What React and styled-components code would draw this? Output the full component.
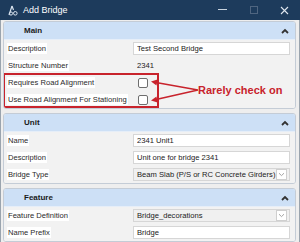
import React from "react";
import styled, { createGlobalStyle } from "styled-components";

const GlobalStyle = createGlobalStyle`
  html, body {
    margin: 0;
    padding: 0;
    background: #ececec;
    font-family: "Liberation Sans", Arial, sans-serif;
  }
`;

const Window = styled.div`
  width: 300px;
  height: 242px;
  display: flex;
  flex-direction: column;
  overflow: hidden;
  background: #eeeeee;
`;

const TitleBar = styled.div`
  height: 20px;
  flex: none;
  background: #1d3b5c;
  display: flex;
  align-items: center;
  padding-left: 7px;
  color: #ffffff;
  font-size: 9px;
`;

const TitleText = styled.span`
  margin-left: 5px;
  flex: 1;
`;

const WinButton = styled.div`
  width: 31px;
  height: 20px;
  display: flex;
  align-items: center;
  justify-content: center;
`;

const Body = styled.div`
  flex: 1;
  display: flex;
  flex-direction: column;
  gap: 4px;
  padding: 1px 3px 0 2px;
  border-left: 1px solid #9aa4ae;
  border-right: 1px solid #9aa4ae;
`;

const Section = styled.div`
  background: #f4f4f4;
  border: 1px solid #c4ccd6;
  border-radius: 3px;
  overflow: hidden;
`;

const SectionHeader = styled.div`
  height: 17px;
  background: #cde0f6;
  display: flex;
  align-items: center;
  padding: 0 6px 0 20px;
  font-size: 8px;
  font-weight: bold;
  color: #1a1a1a;
  border-bottom: 1px solid #e6eef8;
`;

const HeaderTitle = styled.span`
  flex: 1;
`;

const Row = styled.div`
  height: 17px;
  display: grid;
  grid-template-columns: 129px 1fr;
  align-items: center;
  background: #f2f2f2;
`;

const Label = styled.div`
  font-size: 7.6px;
  color: #2a2a2a;
  padding-left: 3px;
  span {
    background: #ffffff;
    padding: 1px 1px;
  }
`;

const ValueBox = styled.div`
  height: 13px;
  margin-right: 5px;
  background: ${(p) => (p.$select ? "#f0f0f0" : "#ffffff")};
  border: 1px solid #d6d6d6;
  display: flex;
  align-items: center;
  padding-left: 3px;
  font-size: 7.6px;
  color: #222222;
  box-sizing: border-box;
`;

const ValueText = styled.span`
  flex: 1;
  white-space: nowrap;
  overflow: hidden;
`;

const DropButton = styled.div`
  width: 9px;
  height: 9px;
  margin-right: 2px;
  border: 1px solid #cfcfcf;
  background: #ffffff;
  display: flex;
  align-items: center;
  justify-content: center;
`;

const PlainValue = styled.div`
  font-size: 7.6px;
  color: #222222;
  padding-left: 4px;
`;

const Check = styled.div`
  width: 8px;
  height: 8px;
  margin-left: 5px;
  border: 1px solid #6e6e6e;
  border-radius: 2px;
  background: #ffffff;
`;

const Flagged = styled.div`
  position: relative;
`;

const RedFrame = styled.div`
  position: absolute;
  left: -1px;
  top: -1px;
  width: 156px;
  height: 35px;
  border: 2px solid #c8232c;
  box-sizing: border-box;
  pointer-events: none;
`;

const Arrows = styled.svg`
  position: absolute;
  left: 146px;
  top: 2px;
`;

const Note = styled.div`
  position: absolute;
  left: 194px;
  top: 10px;
  font-size: 11px;
  font-weight: bold;
  color: #c8232c;
  white-space: nowrap;
`;

const Chevron = ({ color = "#333" }) => (
  <svg width="8" height="6" viewBox="0 0 8 6">
    <path d="M1 5 L4 2 L7 5" fill="none" stroke={color} strokeWidth="1.8" />
  </svg>
);

const Down = () => (
  <svg width="7" height="5" viewBox="0 0 7 5">
    <path d="M1 1.2 L3.5 3.6 L6 1.2" fill="none" stroke="#9a9a9a" strokeWidth="0.9" />
  </svg>
);

function Field({ label, value, select }) {
  return (
    <Row>
      <Label>
        <span>{label}</span>
      </Label>
      <ValueBox $select={select}>
        <ValueText>{value}</ValueText>
        {select && (
          <DropButton>
            <Down />
          </DropButton>
        )}
      </ValueBox>
    </Row>
  );
}

function CheckField({ label }) {
  return (
    <Row>
      <Label>
        <span>{label}</span>
      </Label>
      <Check />
    </Row>
  );
}

function Header({ title }) {
  return (
    <SectionHeader>
      <HeaderTitle>{title}</HeaderTitle>
      <Chevron />
    </SectionHeader>
  );
}

export default function App() {
  return (
    <>
      <GlobalStyle />
      <Window>
        <TitleBar>
          <svg width="11" height="11" viewBox="0 0 11 11">
            <path d="M2 10 L5 1 M5 1 L6.5 5" stroke="#d8e2ee" strokeWidth="1.2" fill="none" />
            <circle cx="4" cy="8.5" r="1.6" fill="none" stroke="#d8e2ee" strokeWidth="1" />
            <circle cx="8.3" cy="8.3" r="1.8" fill="none" stroke="#d8e2ee" strokeWidth="1" />
          </svg>
          <TitleText>Add Bridge</TitleText>
          <WinButton>
            <svg width="9" height="2" viewBox="0 0 9 2">
              <rect width="9" height="1" fill="#c9d3de" />
            </svg>
          </WinButton>
          <WinButton>
            <svg width="8" height="8" viewBox="0 0 8 8">
              <rect x="0.5" y="0.5" width="7" height="7" fill="none" stroke="#4f6580" />
            </svg>
          </WinButton>
          <WinButton>
            <svg width="9" height="9" viewBox="0 0 9 9">
              <path d="M1 1 L8 8 M8 1 L1 8" stroke="#dfe6ee" strokeWidth="1.1" />
            </svg>
          </WinButton>
        </TitleBar>
        <Body>
          <Section>
            <Header title="Main" />
            <Field label="Description" value="Test Second Bridge" />
            <Row>
              <Label>
                <span>Structure Number</span>
              </Label>
              <PlainValue>2341</PlainValue>
            </Row>
            <Flagged>
              <CheckField label="Requires Road Alignment" />
              <CheckField label="Use Road Alignment For Stationing" />
              <RedFrame />
              <Arrows width="50" height="30" viewBox="0 0 50 30">
                <path d="M48 14 L6 6.5 M48 14 L6 23.5" stroke="#c8232c" strokeWidth="1.5" fill="none" />
                <path d="M1 5.5 L7.5 3.5 L6.5 9.5 Z" fill="#c8232c" />
                <path d="M1 24.5 L6.5 20.5 L7.5 26.5 Z" fill="#c8232c" />
              </Arrows>
              <Note>Rarely check on</Note>
            </Flagged>
          </Section>
          <Section>
            <Header title="Unit" />
            <Field label="Name" value="2341 Unit1" />
            <Field label="Description" value="Unit one for bridge 2341" />
            <Field label="Bridge Type" value="Beam Slab (P/S or RC Concrete Girders)" select />
          </Section>
          <Section>
            <Header title="Feature" />
            <Field label="Feature Definition" value="Bridge_decorations" select />
            <Field label="Name Prefix" value="Bridge" />
          </Section>
        </Body>
      </Window>
    </>
  );
}
